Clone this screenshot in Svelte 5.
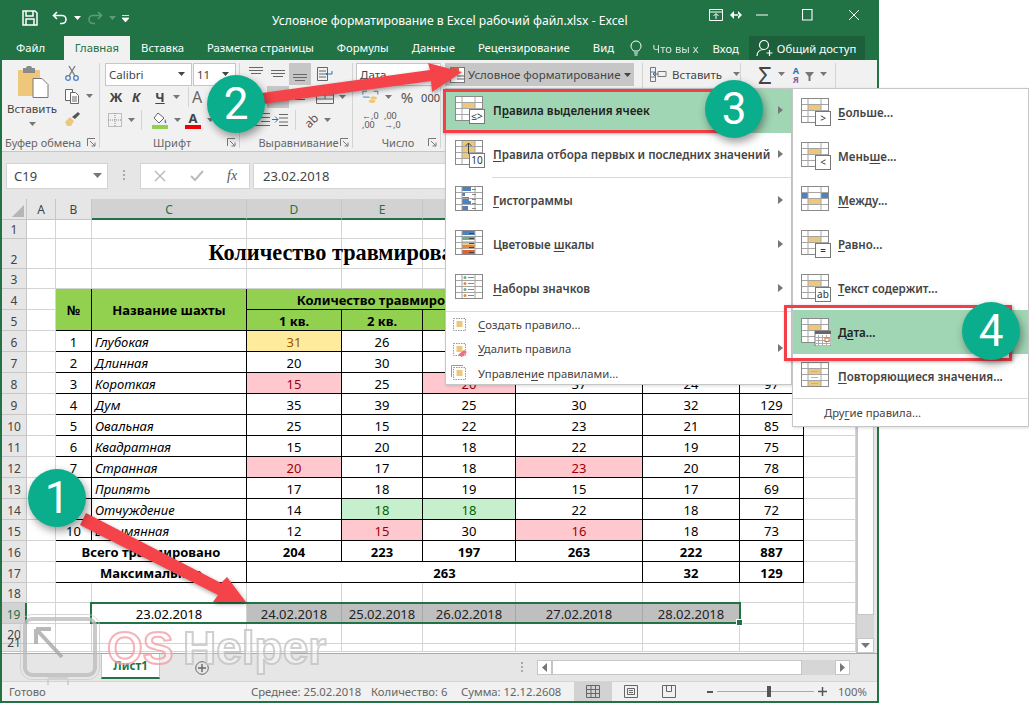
<script>
  // Sheet geometry
  const colNames = ['A', 'B', 'C', 'D', 'E', 'F', 'G', 'H', 'I', 'J', 'K'];
  const selCols = ['C', 'D', 'E', 'F', 'G', 'H'];
  const rowNums = Array.from({ length: 21 }, (_, i) => i + 1);

  const tabs = ['Файл', 'Главная', 'Вставка', 'Разметка страницы', 'Формулы', 'Данные', 'Рецензирование', 'Вид'];

  // num, name, q1..q4, max, total. r = red, g = green, y = yellow marks per column
  const mines = [
    [1, 'Глубокая', 31, 26, 12, 38, 28, 107, { 2: 'y' }],
    [2, 'Длинная', 20, 30, 15, 37, 25, 102, {}],
    [3, 'Короткая', 15, 25, 20, 37, 24, 97, { 2: 'r', 4: 'r' }],
    [4, 'Дум', 35, 39, 25, 30, 32, 129, {}],
    [5, 'Овальная', 25, 15, 22, 23, 21, 85, {}],
    [6, 'Квадратная', 15, 20, 18, 22, 19, 75, {}],
    [7, 'Странная', 20, 17, 18, 23, 20, 78, { 2: 'r', 5: 'r' }],
    [8, 'Припять', 17, 18, 19, 15, 17, 69, {}],
    [9, 'Отчуждение', 14, 18, 18, 22, 18, 72, { 3: 'g', 4: 'g' }],
    [10, 'Безымянная', 12, 15, 30, 16, 18, 73, { 3: 'r', 5: 'r' }]
  ];

  const cells = [];
  function add(col, row, text, cls = '', cspan = 1, rspan = 1) {
    cells.push({ col, row, text, cls, cspan, rspan });
  }

  // Table header (column 2 = B in the cell grid)
  add(2, 4, '№', 'tb head', 1, 2);
  add(3, 4, 'Название шахты', 'tb head', 1, 2);
  add(4, 4, 'Количество травмированных по кварталам', 'tb head', 4, 1);
  add(8, 4, 'Максимум', 'tb head', 1, 2);
  add(9, 4, 'Всего', 'tb head', 1, 2);
  ['1 кв.', '2 кв.', '3 кв.', '4 кв.'].forEach((t, i) => add(4 + i, 5, t, 'tb head'));

  mines.forEach((m, i) => {
    const row = 6 + i;
    add(2, row, m[0], 'tb');
    add(3, row, m[1], 'tb name');
    for (let c = 2; c < 8; c++) {
      add(c + 2, row, m[c], 'tb ' + (m[8][c] || ''));
    }
  });

  add(2, 16, 'Всего травмировано', 'tb bold', 2);
  [204, 223, 197, 263, 222, 887].forEach((v, i) => add(4 + i, 16, v, 'tb bold'));
  add(2, 17, 'Максимальное', 'tb bold', 2);
  add(4, 17, 263, 'tb bold', 4);
  add(8, 17, 32, 'tb bold');
  add(9, 17, 129, 'tb bold');

  add(3, 19, '23.02.2018', 'date');
  ['24.02.2018', '25.02.2018', '26.02.2018', '27.02.2018', '28.02.2018'].forEach((t, i) => add(4 + i, 19, t, 'date sel'));

  // Empty grid cells around the table
  const used = new Set();
  cells.forEach((c) => {
    for (let x = 0; x < c.cspan; x++) for (let y = 0; y < c.rspan; y++) used.add(c.col + x + ':' + (c.row + y));
  });
  for (let r = 1; r <= 21; r++) {
    for (let c = 1; c <= 11; c++) {
      if (!used.has(c + ':' + r)) add(c, r, '', '');
    }
  }
  // The title goes over the empty cells of row 2
  const titleRow = 2;

  const menu1 = [
    { kind: 'cells', badge: '≤>', t: ['П', 'р', 'авила выделения ячеек'], arrow: true, hot: true },
    { kind: 'top', badge: '10', t: ['', 'П', 'равила отбора первых и последних значений'], arrow: true, line: true },
    { kind: 'bars', t: ['', 'Г', 'истограммы'], arrow: true },
    { kind: 'scales', t: ['Цветовые ', 'ш', 'калы'], arrow: true },
    { kind: 'sets', t: ['', 'Н', 'аборы значков'], arrow: true }
  ];
  const menu1small = [
    { kind: 'new', t: ['', 'С', 'оздать правило...'] },
    { kind: 'del', t: ['', 'У', 'далить правила'], arrow: true },
    { kind: 'man', t: ['Управлен', 'и', 'е правилами...'] }
  ];
  const menu2 = [
    { kind: 'cells', badge: '>', t: ['', 'Б', 'ольше...'] },
    { kind: 'cells', badge: '<', t: ['Мень', 'ш', 'е...'] },
    { kind: 'between', t: ['', 'М', 'ежду...'] },
    { kind: 'cells', badge: '=', t: ['', 'Р', 'авно...'] },
    { kind: 'cells', badge: 'ab', t: ['', 'Т', 'екст содержит...'] },
    { kind: 'date', t: ['Д', 'а', 'та...'], hot: true },
    { kind: 'dup', t: ['', 'П', 'овторяющиеся значения...'] }
  ];
</script>

{#snippet label(t)}{t[0]}<u>{t[1]}</u>{t[2]}{/snippet}

{#snippet caret(dark = false)}
  <svg class="caret" width="7" height="4" viewBox="0 0 7 4"><path d="M0 0h7L3.500 4z" fill={dark ? '#444' : '#777'} /></svg>
{/snippet}

{#snippet launcher()}
  <svg class="launcher" width="9" height="9" viewBox="0 0 9 9" fill="none" stroke="#777"><path d="M.5 8V.5H8M3 3l5 5M8 4.500V8H4.500" /></svg>
{/snippet}

{#snippet gridIcon(kind, badge)}
  <svg width="30" height="28" viewBox="0 0 30 28">
    <rect x="0.5" y="0.5" width="27" height="24" fill="#fff" stroke="#8a8a8a" />
    {#if kind === 'cells' || kind === 'date'}
      <rect x="7" y="7" width="13" height="6" fill="#efc77b" />
    {:else if kind === 'top'}
      <rect x="7" y="1" width="13" height="18" fill="#efc77b" />
    {:else if kind === 'between'}
      <rect x="1" y="7" width="6" height="5" fill="#4e81bd" />
      <rect x="20" y="7" width="7" height="5" fill="#4e81bd" />
      <rect x="7" y="13" width="13" height="6" fill="#efc77b" />
    {:else if kind === 'bars'}
      <rect x="7" y="1" width="9" height="4" fill="#4e81bd" />
      <rect x="7" y="6" width="3" height="4" fill="#4e81bd" />
      <rect x="7" y="11" width="7" height="4" fill="#4e81bd" />
      <rect x="7" y="15" width="9" height="4" fill="#4e81bd" />
      <rect x="7" y="20" width="6" height="4" fill="#4e81bd" />
    {:else if kind === 'scales'}
      <rect x="7" y="1" width="13" height="4" fill="#4e81bd" />
      <rect x="7" y="6" width="13" height="4" fill="#77a890" />
      <rect x="7" y="11" width="13" height="4" fill="#efc77b" />
      <rect x="7" y="15" width="13" height="4" fill="#e5883a" />
      <rect x="7" y="20" width="13" height="4" fill="#d9623a" />
    {:else if kind === 'dup'}
      <rect x="7" y="7" width="13" height="5" fill="#efc77b" />
      <rect x="7" y="19" width="13" height="5" fill="#efc77b" />
    {/if}
    <path d="M7 1v23M20 1v23M1 6.500h26M1 12.500h26M1 18.500h26" stroke="#a5a5a5" fill="none" />
    {#if kind === 'top'}
      <path d="M13.500 14V3M10.500 6l3-3 3 3" stroke="#444" fill="none" />
    {:else if kind === 'bars'}
      <path d="M17 3.500h4M17 8.500h4M17 13.500h4M17 17.500h4M17 22.500h4" stroke="#888" />
    {:else if kind === 'scales'}
      <path d="M14 3.500h5M14 8.500h5M14 13.500h5M14 17.500h5M14 22.500h5" stroke="#444" />
    {:else if kind === 'sets'}
      <circle cx="10" cy="3.500" r="1.500" fill="#77a890" />
      <circle cx="10" cy="9.500" r="1.500" fill="#e5883a" />
      <circle cx="10" cy="15.500" r="1.500" fill="#77a890" />
      <circle cx="10" cy="21.500" r="1.500" fill="#e5883a" />
      <path d="M13 3.500h6M13 9.500h6M13 15.500h6M13 21.500h6" stroke="#888" />
    {:else if kind === 'dup'}
      <path d="M10 9.500h7M10 15.500h7M10 21.500h7" stroke="#b3b3b3" />
    {/if}
    {#if badge}
      <rect x="14.500" y="13.500" width="15" height="14" fill="#fff" stroke="#777" />
      <text x="22" y="24" class="badge-text" text-anchor="middle">{badge}</text>
    {/if}
    {#if kind === 'date'}
      <rect x="14" y="13" width="16" height="15" fill="#fff" stroke="#777" />
      <rect x="14" y="13" width="16" height="3" fill="#666" />
      <path d="M17.500 17v10M21.500 17v10M25.500 17v10M15 19.500h14M15 22.500h14M15 25.500h14" stroke="#aaa" />
      <rect x="24" y="20" width="4" height="3.500" fill="#fff" stroke="#d9702a" />
    {/if}
  </svg>
{/snippet}

{#snippet smallIcon(kind)}
  <svg width="16" height="16" viewBox="0 0 16 16">
    {#if kind === 'man'}
      <path d="M.5 12V.5H12" fill="none" stroke="#999" />
    {/if}
    <rect x="2.500" y="2.500" width="12" height="12" fill="#fff" stroke="#999" stroke-dasharray="1.500 1" />
    <rect x="5.500" y="5" width="6" height="6" fill="#efc77b" />
    {#if kind === 'del'}
      <path d="M7 14l6-5 3 2-5 5z" fill="#ec6f86" />
    {/if}
  </svg>
{/snippet}

<div class="window">
  <header class="titlebar">
    <div class="qat">
      <svg width="16" height="16" viewBox="0 0 16 16" fill="none" stroke="#fff" stroke-width="1.500"><path d="M1 1h12l2 2v12H1z" /><path d="M4 1v5h7V1M4 15v-6h8v6" /></svg>
      <svg class="gap-undo" width="16" height="14" viewBox="0 0 16 14" fill="none" stroke="#fff" stroke-width="1.600"><path d="M5 1L1.500 4.500 5 8M2 4.500h8a4 4 0 0 1 0 8H8" /></svg>
      <svg class="caret" width="7" height="4" viewBox="0 0 7 4"><path d="M0 0h7L3.500 4z" fill="#fff" /></svg>
      <svg width="16" height="14" viewBox="0 0 16 14" fill="none" stroke="#5f9a7c" stroke-width="1.600"><path d="M11 1l3.500 3.500L11 8M14 4.500H6a4 4 0 0 0 0 8h2" /></svg>
      <svg class="caret" width="7" height="4" viewBox="0 0 7 4"><path d="M0 0h7L3.500 4z" fill="#5f9a7c" /></svg>
      <svg width="7" height="7" viewBox="0 0 7 7"><path d="M0 .5h7M0 3h7L3.500 7z" stroke="#fff" fill="#fff" stroke-width=".8" /></svg>
    </div>
    <div class="doc-title">Условное форматирование в Excel рабочий файл.xlsx - Excel</div>
    <div class="winbtns">
      <svg width="14" height="12" viewBox="0 0 14 12" fill="none" stroke="#fff"><path d="M.5.500h13v11H.5zM.5 3h13M7 10V5M4.500 7L7 4.500 9.500 7" /></svg>
      <svg class="resize" width="12" height="8" viewBox="0 0 12 8" fill="#fff"><path d="M0 4l4-4v8zM12 4L8 0v8zM3 3.300h6v1.400H3z" /></svg>
      <svg class="min" width="12" height="2" viewBox="0 0 12 2"><path d="M0 1h12" stroke="#fff" /></svg>
      <svg class="max" width="12" height="12" viewBox="0 0 12 12" fill="none" stroke="#fff" stroke-width="1.100"><path d="M.5.500h9.500v10.500H.5z" /></svg>
      <svg class="close" width="12" height="12" viewBox="0 0 12 12" stroke="#fff"><path d="M1 1l10 10M11 1L1 11" /></svg>
    </div>
  </header>

  <nav class="tabs">
    {#each tabs as tab, i}
      <span class="tab" class:active={i === 1} class:file={i === 0}>{tab}</span>
    {/each}
    <svg class="bulb" width="12" height="16" viewBox="0 0 12 16" fill="none" stroke="#fff"><path d="M3.500 11C2 9 1 8 1 6a5 5 0 0 1 10 0c0 2-1 3-2.500 5zM4 13h4M4.500 15h3" /></svg>
    <span class="tell">Что вы х</span>
    <span class="signin">Вход</span>
    <span class="share">
      <svg width="18" height="18" viewBox="0 0 18 18" fill="none" stroke="#fff" stroke-width="1.200"><circle cx="8" cy="6" r="4.500" /><path d="M1 17c0-4 3-6.500 7-6.500M13.500 11v6M10.500 14h6" /></svg>
      Общий доступ
    </span>
  </nav>

  <section class="ribbon">
    <div class="group clip">
      <div class="g-body">
        <div class="paste">
          <svg width="32" height="32" viewBox="0 0 32 32">
            <rect x="1" y="4" width="22" height="26" rx="1" fill="#efc77b" />
            <rect x="6" y="2" width="12" height="5" fill="#8a8a8a" />
            <rect x="9" y="0" width="6" height="4" rx="2" fill="#8a8a8a" />
            <path d="M16 12.500h9l6 6v13H16z" fill="#fff" stroke="#777" />
          </svg>
          <span class="paste-text">Вставить</span>
          {@render caret()}
        </div>
        <div class="clip-tools">
          <svg width="16" height="16" viewBox="0 0 16 16" fill="none" stroke="#4e81bd" stroke-width="1.300"><circle cx="4" cy="13" r="2.300" /><circle cx="12" cy="13" r="2.300" /><path stroke="#777" d="M5 11L11 1M11 11L5 1" /></svg>
          <span class="tool-row">
            <svg width="16" height="16" viewBox="0 0 16 16" fill="#fff" stroke="#666"><path d="M1.500 1.500h7v11h-7z" /><path d="M6.500 4.500h5l3 3v8h-8z" /><path d="M8 9h5M8 11h5M8 13h5" /></svg>
            {@render caret()}
          </span>
          <svg width="17" height="16" viewBox="0 0 17 16"><path d="M1 11l5-5 4 4-3 5H3z" fill="#efc77b" /><path d="M8 6l6-5 2 2-5 5z" fill="#555" /></svg>
        </div>
      </div>
      <div class="g-label"><span>Буфер обмена</span>{@render launcher()}</div>
    </div>

    <div class="group font">
      <div class="g-body col">
        <div class="row">
          <span class="combo fname">Calibri {@render caret(true)}</span>
          <span class="combo fsize">11 {@render caret(true)}</span>
        </div>
        <div class="row tools-b">
          <b class="fb">Ж</b><b class="fb it">К</b><b class="fb un">Ч</b>{@render caret()}
          <span class="vsep"></span>
          <span class="big-a">A</span>
        </div>
        <div class="row tools-c">
          <svg width="14" height="14" viewBox="0 0 14 14" fill="none" stroke="#888" stroke-dasharray="1 1"><path d="M.5.500h13v13H.5zM7 0v14M0 7h14" /></svg>
          {@render caret()}
          <span class="vsep"></span>
          <span class="color-btn">
            <svg width="16" height="12" viewBox="0 0 16 12"><path d="M6 1l6 5-5 5-5-5z" fill="#fff" stroke="#666" /><path d="M13 7c1 2 2 3 1 4s-2-1-1-4z" fill="#4e81bd" /></svg>
            <i class="bar green"></i>
          </span>
          {@render caret()}
          <span class="color-btn a-red">
            <span class="a-letter">A</span>
            <i class="bar red"></i>
          </span>
          {@render caret()}
        </div>
      </div>
      <div class="g-label"><span>Шрифт</span>{@render launcher()}</div>
    </div>

    <div class="group align">
      <div class="g-body col">
        <div class="row al-row">
          <svg class="al" width="22" height="22" viewBox="0 0 22 22" stroke="#666"><path d="M4 4.500h14M4 7.500h14M6 10.500h10" /></svg>
          <svg class="al" width="22" height="22" viewBox="0 0 22 22" stroke="#666"><path d="M4 7.500h14M4 10.500h14M6 13.500h10" /></svg>
          <span class="al-on"><svg width="22" height="22" viewBox="0 0 22 22" stroke="#666"><path d="M4 11.500h14M4 14.500h14M6 17.500h10" /></svg></span>
          <svg class="wrap" width="18" height="16" viewBox="0 0 18 16" fill="none" stroke="#666"><path d="M1.500 1.500h10v13h-10zM3 5h7M3 8h7M3 11h7" /><path stroke="#2a74b8" d="M10 8h6v-3M12 6l-2 2 2 2" /></svg>
        </div>
        <div class="row al-row">
          <span class="al-gap"></span>
          <span class="al-on"></span>
          <svg class="al" width="22" height="22" viewBox="0 0 22 22" stroke="#666"><path d="M6 7.500h10M6 10.500h10M6 13.500h10" /></svg>
          <svg class="wrap" width="18" height="14" viewBox="0 0 18 14" fill="none" stroke="#666"><path d="M.5.500h17v13H.5zM.5 5h17M.5 9h17M9 5v4" /></svg>
          {@render caret()}
        </div>
        <div class="row al-row third">
          <svg width="18" height="16" viewBox="0 0 18 16" fill="none" stroke="#666"><path d="M8 1.500h9M8 5.500h9M8 9.500h9M1 13.500h16" /></svg>
          <svg width="18" height="16" viewBox="0 0 18 16" fill="none" stroke="#666"><path d="M8 2.500h9M8 6h9M8 10h9M8 13.500h9" /><path stroke="#2a74b8" d="M1 7.500h6M4 4.500l3 3-3 3" /></svg>
          <span class="vsep"></span>
          <span class="orient">ab</span>
          {@render caret()}
        </div>
      </div>
      <div class="g-label"><span>Выравнивание</span>{@render launcher()}</div>
    </div>

    <div class="group number">
      <div class="g-body col">
        <div class="row"><span class="combo fdata">Дата</span></div>
        <div class="row num-row">
          <svg width="20" height="17" viewBox="0 0 20 17"><path d="M1 5V1h5M19 5V1h-5M1 8h8" fill="none" stroke="#2a74b8" /><ellipse cx="14" cy="9" rx="4" ry="2" fill="#efc77b" /><ellipse cx="12" cy="13" rx="4" ry="2" fill="#efc77b" /></svg>
          {@render caret()}
          <span class="pct">%</span>
          <span class="thou">000</span>
        </div>
        <div class="row num-row dec">
          <span class="dec-btn"><i>←,0</i><i>,00</i></span>
          <span class="dec-btn"><i>,00</i><i>→,0</i></span>
        </div>
      </div>
      <div class="g-label"><span>Число</span>{@render launcher()}</div>
    </div>

    <div class="group styles">
      <span class="cond">
        <svg width="15" height="16" viewBox="0 0 15 16"><rect x=".5" y=".5" width="14" height="15" fill="#fff" stroke="#777" /><rect x="1" y="1" width="8" height="5" fill="#d9623a" /><path d="M7 9h7M7 12h7" stroke="#666" /></svg>
        Условное форматирование {@render caret(true)}
      </span>
    </div>
    <div class="group cells-g">
      <span class="insert">
        <svg width="17" height="17" viewBox="0 0 17 17" fill="none" stroke="#777"><path d="M.5 1.500h5v14h-5zM.5 6h5M.5 11h5" /><path d="M8 5.500h8v5H8z" /><path stroke="#2a74b8" d="M3 8h5M5 6L3 8l2 2" /></svg>
        Вставить {@render caret()}
      </span>
    </div>
    <div class="group edit-g">
      <span class="sigma">Σ</span>{@render caret()}
      <span class="sort"><i class="az">A</i><i class="ya">Я</i></span>
      <svg width="9" height="9" viewBox="0 0 9 9"><path d="M0 0h9L5.500 4.500V9h-2V4.500z" fill="#777" /></svg>
      {@render caret()}
    </div>
  </section>

  <section class="formula">
    <span class="namebox">C19 <svg width="9" height="5" viewBox="0 0 9 5"><path d="M0 0h9L4.500 5z" fill="#777" /></svg></span>
    <span class="dots"></span>
    <span class="fxbox">
      <svg width="12" height="12" viewBox="0 0 12 12" stroke="#bbb" stroke-width="1.500"><path d="M1 1l10 10M11 1L1 11" /></svg>
      <svg width="14" height="12" viewBox="0 0 14 12" fill="none" stroke="#bbb" stroke-width="2"><path d="M1 6l4 4 8-9" /></svg>
      <em>fx</em>
    </span>
    <span class="finput">23.02.2018</span>
  </section>

  <section class="sheet">
    <div class="grid">
      <div class="corner" style:grid-area="1 / 1"><i></i></div>
      {#each colNames as name, i}
        <div class="colhead" class:on={selCols.includes(name)} style:grid-area="1 / {i + 2}">{name}</div>
      {/each}
      {#each rowNums as n}
        <div class="rowhead" class:on={n === 19} style:grid-area="{n + 1} / 1">{n}</div>
      {/each}
      {#each cells as c}
        <div
          class="cell {c.cls}"
          style:grid-column="{c.col + 1} / span {c.cspan}"
          style:grid-row="{c.row + 1} / span {c.rspan}"
        >{c.text}</div>
      {/each}
      <div class="title" style:grid-row={titleRow + 1}>Количество травмированных по кварталам</div>
      <div class="selection"><i></i></div>
    </div>
    <div class="vscroll">
      <div class="v-thumb"></div>
      <div class="v-track"></div>
      <div class="v-btn"><svg width="9" height="5" viewBox="0 0 9 5"><path d="M0 0h9L4.500 5z" fill="#777" /></svg></div>
    </div>
  </section>

  <section class="sheetbar">
    <span class="sheet-tab">Лист1</span>
    <svg class="add" width="14" height="14" viewBox="0 0 14 14" fill="none" stroke="#666"><circle cx="7" cy="7" r="6.300" /><path d="M7 3v8M3 7h8" stroke-width="1.400" /></svg>
    <span class="grip"></span>
    <div class="hscroll">
      <span class="h-btn"><svg width="5" height="9" viewBox="0 0 5 9"><path d="M5 0v9L0 4.500z" fill="#777" /></svg></span>
      <span class="h-thumb"></span>
      <span class="h-track"></span>
      <span class="h-btn"><svg width="5" height="9" viewBox="0 0 5 9"><path d="M0 0v9l5-4.500z" fill="#777" /></svg></span>
    </div>
  </section>

  <footer class="status">
    <span class="ready">Готово</span>
    <span class="st avg">Среднее: 25.02.2018</span>
    <span class="st cnt">Количество: 6</span>
    <span class="st sum">Сумма: 12.12.2608</span>
    <span class="view on"><svg width="14" height="13" viewBox="0 0 14 13" fill="none" stroke="#666"><path d="M.5.500h13v12H.5zM.5 4.500h13M.5 8.500h13M5 .5v12M9.500.5v12" /></svg></span>
    <span class="view"><svg width="14" height="13" viewBox="0 0 14 13" fill="none" stroke="#666"><path d="M.5.500h13v12H.5zM3.500 3.500h7v6h-7zM5 5.500h4M5 7.500h4" /></svg></span>
    <span class="view"><svg width="14" height="13" viewBox="0 0 14 13" fill="none" stroke="#666"><path d="M.5.500h13v12H.5zM4.500.5v6h5v-6" /></svg></span>
    <span class="zoomer">
      <i class="minus"></i>
      <span class="slider"><i></i></span>
      <svg width="9" height="9" viewBox="0 0 9 9" stroke="#555" stroke-width="1.500"><path d="M0 4.500h9M4.500 0v9" /></svg>
    </span>
    <span class="pctz">100%</span>
  </footer>
</div>

<!-- Dropdown menus lie over the ribbon and sheet -->
<div class="menu m1">
  {#each menu1 as it}
    <div class="item big" class:hot={it.hot}>
      {@render gridIcon(it.kind, it.badge)}
      <span class="it-text">{@render label(it.t)}</span>
      {#if it.arrow}<i class="sub"></i>{/if}
    </div>
    {#if it.line}<div class="m-line"></div>{/if}
  {/each}
  <div class="m-sep"></div>
  {#each menu1small as it}
    <div class="item small">
      {@render smallIcon(it.kind)}
      <span class="it-text">{@render label(it.t)}</span>
      {#if it.arrow}<i class="sub"></i>{/if}
    </div>
  {/each}
</div>

<div class="menu m2">
  {#each menu2 as it}
    <div class="item big" class:hot={it.hot}>
      {@render gridIcon(it.kind, it.badge)}
      <span class="it-text">{@render label(it.t)}</span>
    </div>
  {/each}
  <div class="m-sep"></div>
  <div class="item other"><span>Дру<u>г</u>ие правила...</span></div>
</div>

<div class="redbox r3"></div>
<div class="redbox r4"></div>

<svg class="arrows" width="1029" height="703" viewBox="0 0 1029 703">
  <path d="M262 93L430 70 428 63 462 72 432 92 431 81 263 104z" />
  <path d="M86 513L221 583 227 577 246 602 213 602 218 595 80 525z" />
</svg>

<div class="watermark">
  <div class="wm-box">
    <svg width="50" height="50" viewBox="0 0 50 50" fill="none" stroke="#a8a8a8" stroke-width="4"><path d="M6 6l26 28M6 6h15M6 6v15" /></svg>
  </div>
  <span class="wm-foot"></span>
  <span class="wm-os">OS</span>
  <span class="wm-helper">Helper</span>
</div>

<div class="num n1">1</div>
<div class="num n2">2</div>
<div class="num n3">3</div>
<div class="num n4">4</div>

<style>
  :global(body) {
    margin: 0;
    background: #fff;
  }

  .window {
    width: 879px;
    height: 703px;
    box-sizing: border-box;
    border: solid #217346;
    border-width: 0 2px 2px 2px;
    display: flex;
    flex-direction: column;
    font-family: 'Noto Sans', sans-serif;
    font-size: 11.500px;
    color: #444;
    overflow: hidden;
    background: #e6e6e6;
  }

  u {
    text-underline-offset: 2px;
  }

  .caret {
    flex: none;
  }

  /* Title bar */
  .titlebar {
    height: 36px;
    flex: none;
    background: #217346;
    color: #fff;
    display: flex;
    align-items: center;
    margin: 0 -2px;
  }
  .qat {
    display: flex;
    align-items: center;
    width: 272px;
    padding-left: 22px;
    box-sizing: border-box;
    gap: 6px;
  }
  .gap-undo {
    margin-left: 8px;
  }
  .doc-title {
    width: 334px;
    font-size: 12.200px;
    white-space: nowrap;
    margin-top: 5px;
  }
  .winbtns {
    flex: 1;
    display: flex;
    align-items: center;
    padding-left: 103px;
    margin-top: -6px;
  }
  .resize {
    margin-left: 7px;
  }
  .min {
    margin-left: 14px;
  }
  .max {
    margin-left: 34px;
  }
  .close {
    margin-left: 34px;
  }

  /* Tabs */
  .tabs {
    height: 24px;
    flex: none;
    background: #217346;
    color: #fff;
    display: flex;
    align-items: center;
    margin: 0 -2px;
    position: relative;
    font-size: 11.300px;
    white-space: nowrap;
  }
  .tab {
    padding: 0 11.500px;
    line-height: 24px;
    white-space: nowrap;
  }
  .tab.file {
    padding: 0 19px 0 16px;
  }
  .tab.active {
    background: #f1f1f1;
    color: #217346;
    padding: 0 10.500px;
  }
  .bulb {
    margin-left: 4px;
  }
  .tell {
    margin-left: 11px;
    opacity: 0.8;
  }
  .signin {
    margin-left: 14px;
  }
  .share {
    margin-left: 10px;
    background: #1d5f3b;
    height: 24px;
    width: 116px;
    display: flex;
    align-items: center;
    gap: 3px;
    padding-left: 7px;
    box-sizing: border-box;
  }

  /* Ribbon */
  .ribbon {
    height: 92px;
    flex: none;
    background: #f1f1f1;
    border-bottom: 1px solid #c6c6c6;
    display: flex;
    box-sizing: border-box;
  }
  .group {
    box-sizing: border-box;
    border-right: 1px solid #d4d4d4;
    margin: 3px 0;
    display: flex;
    flex-direction: column;
  }
  .g-body {
    flex: 1;
    display: flex;
  }
  .col {
    flex-direction: column;
    gap: 1px;
  }
  .g-label {
    height: 19px;
    display: flex;
    align-items: center;
    justify-content: center;
    color: #666;
    position: relative;
    margin-bottom: -5px;
    font-size: 11px;
    flex: none;
    transform: translateY(-1px);
  }
  .launcher {
    position: absolute;
    right: 3px;
    top: 5px;
  }
  .row {
    display: flex;
    align-items: center;
    height: 22px;
  }
  .vsep {
    width: 1px;
    height: 20px;
    background: #d4d4d4;
  }

  .clip {
    width: 98px;
  }
  .clip .g-label {
    justify-content: flex-start;
    padding-left: 3px;
  }
  .paste {
    width: 60px;
    display: flex;
    flex-direction: column;
    align-items: center;
    padding-top: 3px;
    box-sizing: border-box;
  }
  .paste svg:first-child {
    margin-left: 2px;
  }
  .paste-text {
    margin-top: 3px;
    margin-bottom: 6px;
  }
  .clip-tools {
    display: flex;
    flex-direction: column;
    gap: 7px;
    padding: 2px 0 0 2px;
  }
  .tool-row {
    display: flex;
    align-items: center;
    gap: 6px;
  }

  .font {
    width: 140px;
    padding-left: 5px;
  }
  .combo {
    height: 23px;
    box-sizing: border-box;
    background: #fff;
    border: 1px solid #c6c6c6;
    display: flex;
    align-items: center;
    justify-content: space-between;
    padding: 0 6px 0 3px;
    color: #444;
  }
  .fname {
    width: 87px;
  }
  .fsize {
    width: 43px;
    margin-left: 1px;
  }
  .tools-b {
    padding-left: 1px;
    gap: 0;
  }
  .fb {
    font-size: 13px;
    width: 20px;
    text-align: center;
    color: #444;
  }
  .it {
    font-style: italic;
  }
  .un {
    text-decoration: underline;
    margin-left: 4px;
    margin-right: 3px;
  }
  .tools-b .vsep {
    margin: 0 3px 0 8px;
  }
  .big-a {
    font-size: 16px;
    color: #666;
  }
  .tools-c {
    padding-left: 3px;
    gap: 6px;
  }
  .color-btn {
    display: flex;
    flex-direction: column;
    align-items: center;
    width: 16px;
    margin-left: 4px;
  }
  .a-red {
    margin-left: -2px;
  }
  .a-letter {
    font-weight: 700;
    font-size: 13px;
    line-height: 14px;
    color: #444;
  }
  .bar {
    display: block;
    height: 4px;
    width: 16px;
  }
  .green {
    background: #92d050;
    margin-top: 1px;
  }
  .red {
    background: #e00;
  }

  .align {
    width: 113px;
    padding-left: 5px;
  }
  .al-row {
    gap: 0;
  }
  .al-on {
    width: 22px;
    height: 22px;
    background: #c6c6c6;
    display: block;
  }
  .al-gap {
    width: 22px;
  }
  .wrap {
    margin-left: 5px;
    margin-right: 5px;
  }
  .third {
    gap: 0;
    padding-left: 8px;
  }
  .third .vsep {
    margin: 0 8px 0 6px;
  }
  .orient {
    font-size: 12px;
    transform: rotate(-45deg);
    margin-right: 6px;
    color: #555;
  }

  .number {
    width: 88px;
    padding-left: 3px;
  }
  .fdata {
    width: 90px;
    border-right: 0;
  }
  .num-row {
    gap: 6px;
    padding-left: 6px;
  }
  .pct {
    font-size: 15px;
    margin-left: 3px;
    color: #555;
  }
  .thou {
    font-size: 11px;
    margin-left: 2px;
  }
  .dec {
    gap: 2px;
  }
  .dec-btn {
    display: flex;
    flex-direction: column;
    font-size: 9px;
    line-height: 9px;
    width: 20px;
    color: #555;
  }
  .dec-btn i {
    font-style: normal;
    white-space: nowrap;
  }

  .styles {
    width: 201px;
    flex-direction: row;
    align-items: flex-start;
    border: 0;
  }
  .cond {
    margin-left: 4px;
    width: 189px;
    height: 23px;
    background: #c6c6c6;
    display: flex;
    align-items: center;
    gap: 3px;
    padding-left: 5px;
    box-sizing: border-box;
    white-space: nowrap;
    color: #444;
  }
  .cells-g {
    width: 99px;
    flex-direction: row;
    border-left: 1px solid #d4d4d4;
  }
  .insert {
    height: 22px;
    display: flex;
    align-items: center;
    gap: 5px;
    padding-left: 7px;
  }
  .insert .caret {
    margin-left: 6px;
  }
  .edit-g {
    width: 95px;
    flex-direction: row;
    align-items: flex-start;
    gap: 6px;
    padding: 0 0 0 17px;
  }
  .edit-g .caret,
  .edit-g svg {
    margin-top: 9px;
  }
  .sigma {
    font-size: 24px;
    line-height: 23px;
    color: #444;
  }
  .sort {
    display: flex;
    flex-direction: column;
    font-size: 9px;
    line-height: 9px;
    font-style: normal;
    font-weight: 700;
    margin-top: 3px;
    margin-left: 2px;
  }
  .sort i {
    font-style: normal;
  }
  .az {
    color: #2a74b8;
  }
  .ya {
    color: #8c5aa8;
  }

  /* Formula bar */
  .formula {
    height: 47px;
    flex: none;
    background: #e6e6e6;
    display: flex;
    align-items: center;
    padding: 0 0 0 4px;
    font-size: 13px;
  }
  .namebox,
  .fxbox,
  .finput {
    height: 26px;
    box-sizing: border-box;
    background: #fff;
    border: 1px solid #d4d4d4;
    display: flex;
    align-items: center;
  }
  .namebox {
    width: 102px;
    justify-content: space-between;
    padding: 0 5px 0 7px;
    color: #444;
  }
  .dots {
    width: 2px;
    height: 12px;
    margin: 0 15px;
    background: repeating-linear-gradient(#aaa 0 2px, transparent 2px 4px);
  }
  .fxbox {
    width: 110px;
    padding-left: 13px;
    gap: 24px;
  }
  .fxbox em {
    font-family: 'Liberation Serif', serif;
    font-size: 14px;
    margin-left: -1px;
    color: #555;
  }
  .finput {
    margin-left: 3px;
    flex: 1;
    padding-left: 9px;
    margin-right: 0;
    color: #444;
  }

  /* Sheet */
  .sheet {
    flex: none;
    height: 454px;
    display: flex;
    background: #fff;
    overflow: hidden;
  }
  .grid {
    position: relative;
    width: 854px;
    display: grid;
    grid-template-columns: 25px 29px 36px 155px 95px 81px 93px 127px 97px 64px 52px;
    grid-template-rows: 21px 19px 30px 20px repeat(14, 21px) 20px 21px 20px 8px;
    font-size: 13px;
    color: #000;
    overflow: hidden;
    background: #fff;
  }
  .corner {
    background: #e6e6e6;
    border-right: 1px solid #c6c6c6;
    border-bottom: 1px solid #c6c6c6;
    position: relative;
  }
  .corner i {
    position: absolute;
    right: 2px;
    bottom: 2px;
    border-style: solid;
    border-width: 0 0 12px 12px;
    border-color: transparent transparent #b5b5b5 transparent;
  }
  .colhead,
  .rowhead {
    background: #e6e6e6;
    color: #444;
    display: flex;
    align-items: center;
    justify-content: center;
    box-sizing: border-box;
    border-right: 1px solid #c6c6c6;
    border-bottom: 1px solid #c6c6c6;
    font-size: 12px;
    padding-top: 1px;
  }
  .colhead.on {
    background: #d2d2d2;
    color: #217346;
    border-bottom: 2px solid #217346;
  }
  .rowhead {
    align-items: flex-end;
  }
  .rowhead.on {
    background: #d2d2d2;
    color: #217346;
    border-right: 2px solid #217346;
  }
  .cell {
    box-sizing: border-box;
    border-right: 1px solid #d4d4d4;
    border-bottom: 1px solid #d4d4d4;
    display: flex;
    align-items: center;
    justify-content: center;
    white-space: nowrap;
    overflow: hidden;
  }
  .title {
    grid-column: 3 / span 8;
    align-self: end;
    text-align: center;
    font-family: 'Liberation Serif', serif;
    font-weight: 700;
    font-size: 22.300px;
    line-height: 26px;
    color: #000;
    white-space: nowrap;
    padding-bottom: 3px;
  }
  .tb {
    border-right: 1px solid #000;
    border-bottom: 1px solid #000;
    box-shadow: -1px 0 0 #000, 0 -1px 0 #000;
    padding-top: 1px;
  }
  .head {
    background: #92d050;
    font-weight: 700;
    white-space: normal;
    text-align: center;
  }
  .bold {
    font-weight: 700;
  }
  .name {
    justify-content: flex-start;
    font-style: italic;
    padding-left: 3px;
  }
  .y {
    background: #ffeb9c;
    color: #9c5700;
  }
  .r {
    background: #ffc7ce;
    color: #9c0006;
  }
  .g {
    background: #c6efce;
    color: #006100;
  }
  .date {
    padding-top: 1px;
  }
  .sel {
    background: #bfbfbf;
    border-right-color: #a8a8a8;
    border-bottom-color: #fff;
    color: #222;
  }
  .selection {
    position: absolute;
    left: 88px;
    top: 403px;
    width: 651px;
    height: 22px;
    box-sizing: border-box;
    border: 2px solid #217346;
    pointer-events: none;
  }
  .selection i {
    position: absolute;
    right: -4px;
    bottom: -4px;
    width: 5px;
    height: 5px;
    background: #217346;
    border: 1px solid #fff;
  }
  .vscroll {
    flex: 1;
    background: #e6e6e6;
    border-left: 1px solid #c6c6c6;
    display: flex;
    flex-direction: column;
    padding: 0 3px 0 0;
  }
  .v-thumb {
    height: 416px;
    background: #fff;
    border: 1px solid #c6c6c6;
    box-sizing: border-box;
    flex: none;
  }
  .v-track {
    flex: 1;
    background: #d6d6d6;
  }
  .v-btn {
    height: 15px;
    background: #fff;
    border: 1px solid #c6c6c6;
    box-sizing: border-box;
    display: flex;
    align-items: center;
    justify-content: center;
  }

  /* Sheet tabs */
  .sheetbar {
    height: 28px;
    flex: none;
    background: #e6e6e6;
    border-top: 1px solid #aaa;
    box-sizing: border-box;
    display: flex;
    align-items: flex-start;
    position: relative;
  }
  .sheet-tab {
    margin-left: 99px;
    width: 59px;
    height: 25px;
    box-sizing: border-box;
    background: #fff;
    border: 1px solid #c6c6c6;
    border-top: 0;
    border-bottom: 2px solid #217346;
    color: #217346;
    font-weight: 700;
    text-align: center;
    line-height: 23px;
  }
  .add {
    margin: 7px 0 0 35px;
  }
  .grip {
    width: 2px;
    height: 10px;
    margin: 8px 0 0 312px;
    background: repeating-linear-gradient(#aaa 0 2px, transparent 2px 4px);
  }
  .hscroll {
    margin: 6px 0 0 14px;
    display: flex;
    width: 313px;
    height: 15px;
  }
  .h-btn {
    width: 15px;
    flex: none;
    box-sizing: border-box;
    background: #fff;
    border: 1px solid #c6c6c6;
    display: flex;
    align-items: center;
    justify-content: center;
  }
  .h-thumb {
    width: 250px;
    background: #fff;
    border: 1px solid #c6c6c6;
    box-sizing: border-box;
  }
  .h-track {
    flex: 1;
    background: #d6d6d6;
  }

  /* Status bar */
  .status {
    flex: 1;
    background: #f1f1f1;
    border-top: 1px solid #d4d4d4;
    display: flex;
    align-items: center;
    color: #666;
    font-size: 11.300px;
    min-height: 0;
  }
  .ready {
    margin-left: 7px;
    width: 242px;
  }
  .avg {
    width: 120px;
  }
  .cnt {
    width: 90px;
  }
  .sum {
    width: 113px;
  }
  .view {
    width: 38px;
    height: 100%;
    display: flex;
    align-items: center;
    justify-content: center;
  }
  .view.on {
    background: #d2d2d2;
  }
  .zoomer {
    display: flex;
    align-items: center;
    margin-left: 19px;
    gap: 4px;
  }
  .minus {
    width: 6px;
    height: 2px;
    background: #555;
  }
  .slider {
    width: 97px;
    height: 1px;
    background: #aaa;
    position: relative;
  }
  .slider i {
    position: absolute;
    left: 50px;
    top: -5px;
    width: 4px;
    height: 11px;
    background: #555;
  }
  .pctz {
    margin-left: 11px;
  }

  /* Menus */
  .menu {
    position: absolute;
    top: 88px;
    box-sizing: border-box;
    background: #fff;
    border: 1px solid #c6c6c6;
    font-family: 'Noto Sans', sans-serif;
    font-size: 11.600px;
    color: #444;
    box-shadow: 1px 1px 3px rgba(0, 0, 0, 0.15);
  }
  .m1 {
    left: 445px;
    width: 347px;
    height: 297px;
  }
  .m2 {
    left: 792px;
    width: 237px;
    height: 339px;
    padding-top: 1px;
  }
  .item {
    display: flex;
    align-items: center;
    position: relative;
  }
  .big {
    height: 44px;
    padding-left: 9px;
    gap: 8px;
    font-weight: 600;
    box-sizing: border-box;
  }
  .m1 .big {
    padding-bottom: 2px;
  }
  .m2 .big {
    gap: 7px;
    padding-left: 8px;
  }
  .hot {
    background: #a0d6b4;
    color: #222;
  }
  .small {
    height: 24.500px;
    padding-left: 5px;
    gap: 11px;
    font-size: 11.300px;
  }
  .sub {
    position: absolute;
    right: 8px;
    top: 50%;
    margin-top: -5px;
    border-style: solid;
    border-width: 4px 0 4px 5px;
    border-color: transparent transparent transparent #777;
  }
  .m-line {
    height: 1px;
    margin: 0 0 1px 46px;
    background: #d9d9d9;
  }
  .m-sep {
    height: 1px;
    background: #d9d9d9;
  }
  .other {
    height: 26px;
    padding-left: 31px;
    font-size: 11.300px;
  }
  .badge-text {
    font-family: 'Noto Sans', sans-serif;
    font-size: 10px;
    fill: #333;
    font-weight: 400;
  }

  .redbox {
    position: absolute;
    box-sizing: border-box;
    border: 3px solid #f43f48;
    box-shadow: 1px 1px 3px rgba(0, 0, 0, 0.3);
  }
  .r3 {
    left: 443px;
    top: 89px;
    width: 290px;
    height: 44px;
  }
  .r4 {
    left: 784px;
    top: 305px;
    width: 228px;
    height: 56px;
  }

  .arrows {
    position: absolute;
    left: 0;
    top: 0;
    fill: #f44349;
    filter: drop-shadow(1px 2px 2px rgba(0, 0, 0, 0.35));
    pointer-events: none;
  }

  .num {
    position: absolute;
    width: 58px;
    height: 58px;
    border-radius: 50%;
    background: #0aae8c;
    color: #fff;
    font-family: Roboto, sans-serif;
    font-size: 44px;
    line-height: 58px;
    text-align: center;
    box-shadow: 2px 4px 8px rgba(0, 0, 0, 0.4);
  }
  .n1 {
    left: 28px;
    top: 469px;
  }
  .n2 {
    left: 207px;
    top: 75px;
  }
  .n3 {
    left: 705px;
    top: 80px;
  }
  .n4 {
    left: 962px;
    top: 302px;
  }

  .watermark {
    position: absolute;
    left: 23px;
    top: 617px;
    width: 310px;
    height: 68px;
    opacity: 0.8;
    pointer-events: none;
  }
  .wm-box {
    position: absolute;
    left: 0;
    top: 0;
    width: 74px;
    height: 60px;
    box-sizing: border-box;
    border: 4px solid #bdbdbd;
    outline: 1px solid #ccc;
    outline-offset: 2px;
    border-radius: 9px;
    padding: 2px 0 0 3px;
  }
  .wm-foot {
    position: absolute;
    left: 24px;
    top: 60px;
    width: 22px;
    height: 8px;
    box-sizing: border-box;
    border: 2px solid #ccc;
    border-bottom: 0;
    border-radius: 3px 3px 0 0;
  }
  .wm-os,
  .wm-helper {
    position: absolute;
    top: 6px;
    font-family: 'Liberation Sans', sans-serif;
    font-weight: 700;
    font-size: 46px;
    line-height: 50px;
    color: rgba(255, 255, 255, 0.5);
  }
  .wm-os {
    left: 84px;
    -webkit-text-stroke: 2px #f4a0a8;
  }
  .wm-helper {
    left: 160px;
    -webkit-text-stroke: 2px #c4c4c4;
  }
</style>
